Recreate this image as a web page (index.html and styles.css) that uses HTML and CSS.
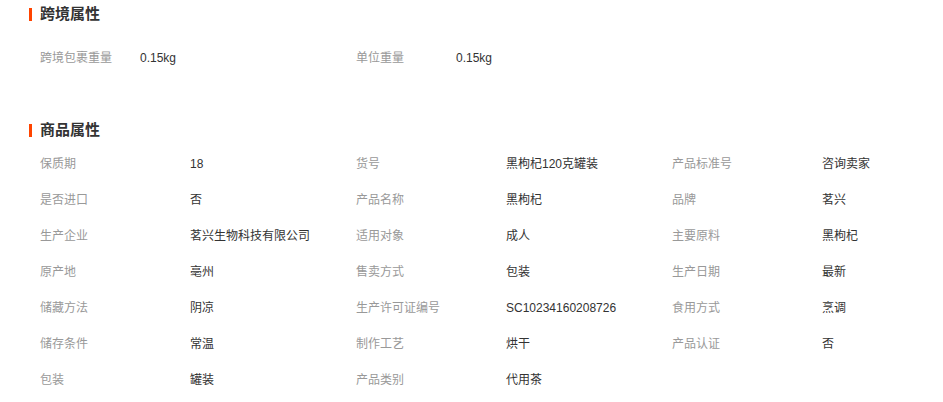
FILE: index.html
```html
<!DOCTYPE html>
<html lang="zh-CN">
<head>
    <meta charset="UTF-8">
    <meta name="viewport" content="width=device-width, initial-scale=1.0">
    <title>商品属性</title>
    <link rel="stylesheet" href="styles.css">
</head>
<body>
    <div class="attr-section first">
        <h3 class="attr-title">跨境属性</h3>
        <ul class="attr-list cross">
            <li><span class="label">跨境包裹重量</span><span class="value">0.15kg</span></li>
            <li><span class="label">单位重量</span><span class="value">0.15kg</span></li>
        </ul>
    </div>

    <div class="attr-section">
        <h3 class="attr-title">商品属性</h3>
        <ul class="attr-list">
            <li><span class="label">保质期</span><span class="value">18</span></li>
            <li><span class="label">货号</span><span class="value">黑枸杞120克罐装</span></li>
            <li><span class="label">产品标准号</span><span class="value">咨询卖家</span></li>
            <li><span class="label">是否进口</span><span class="value">否</span></li>
            <li><span class="label">产品名称</span><span class="value">黑枸杞</span></li>
            <li><span class="label">品牌</span><span class="value">茗兴</span></li>
            <li><span class="label">生产企业</span><span class="value">茗兴生物科技有限公司</span></li>
            <li><span class="label">适用对象</span><span class="value">成人</span></li>
            <li><span class="label">主要原料</span><span class="value">黑枸杞</span></li>
            <li><span class="label">原产地</span><span class="value">亳州</span></li>
            <li><span class="label">售卖方式</span><span class="value">包装</span></li>
            <li><span class="label">生产日期</span><span class="value">最新</span></li>
            <li><span class="label">储藏方法</span><span class="value">阴凉</span></li>
            <li><span class="label">生产许可证编号</span><span class="value">SC10234160208726</span></li>
            <li><span class="label">食用方式</span><span class="value">烹调</span></li>
            <li><span class="label">储存条件</span><span class="value">常温</span></li>
            <li><span class="label">制作工艺</span><span class="value">烘干</span></li>
            <li><span class="label">产品认证</span><span class="value">否</span></li>
            <li><span class="label">包装</span><span class="value">罐装</span></li>
            <li><span class="label">产品类别</span><span class="value">代用茶</span></li>
        </ul>
    </div>
</body>
</html>
```

FILE: styles.css
```css
body {
    margin: 0;
    padding: 0;
    background: #fff;
    font-family: "Liberation Sans", "Noto Sans CJK SC", sans-serif;
    font-size: 12px;
    color: #333;
    overflow: hidden;
}

.attr-section {
    margin-top: 44px;
    padding-left: 29px;
}

.attr-section.first {
    margin-top: 0;
    padding-top: 4px;
}

.attr-title {
    display: flex;
    align-items: center;
    gap: 8px;
    margin: 0;
    height: 20px;
    line-height: 20px;
    font-size: 15px;
    font-weight: bold;
    color: #333;
}

.attr-title::before {
    content: "";
    width: 3px;
    height: 13px;
    background: #ff4400;
}

.attr-list {
    list-style: none;
    margin: 6px 0 0 11px;
    padding: 0;
    display: grid;
    grid-template-columns: repeat(3, 316px);
    width: 948px;
}

.attr-list.cross {
    margin-top: 16px;
}

.attr-list li {
    display: flex;
    align-items: center;
    height: 36px;
    line-height: 16px;
    white-space: nowrap;
}

.label {
    width: 150px;
    color: #999;
}

.cross .label {
    width: 100px;
}

.value {
    color: #333;
}
```
